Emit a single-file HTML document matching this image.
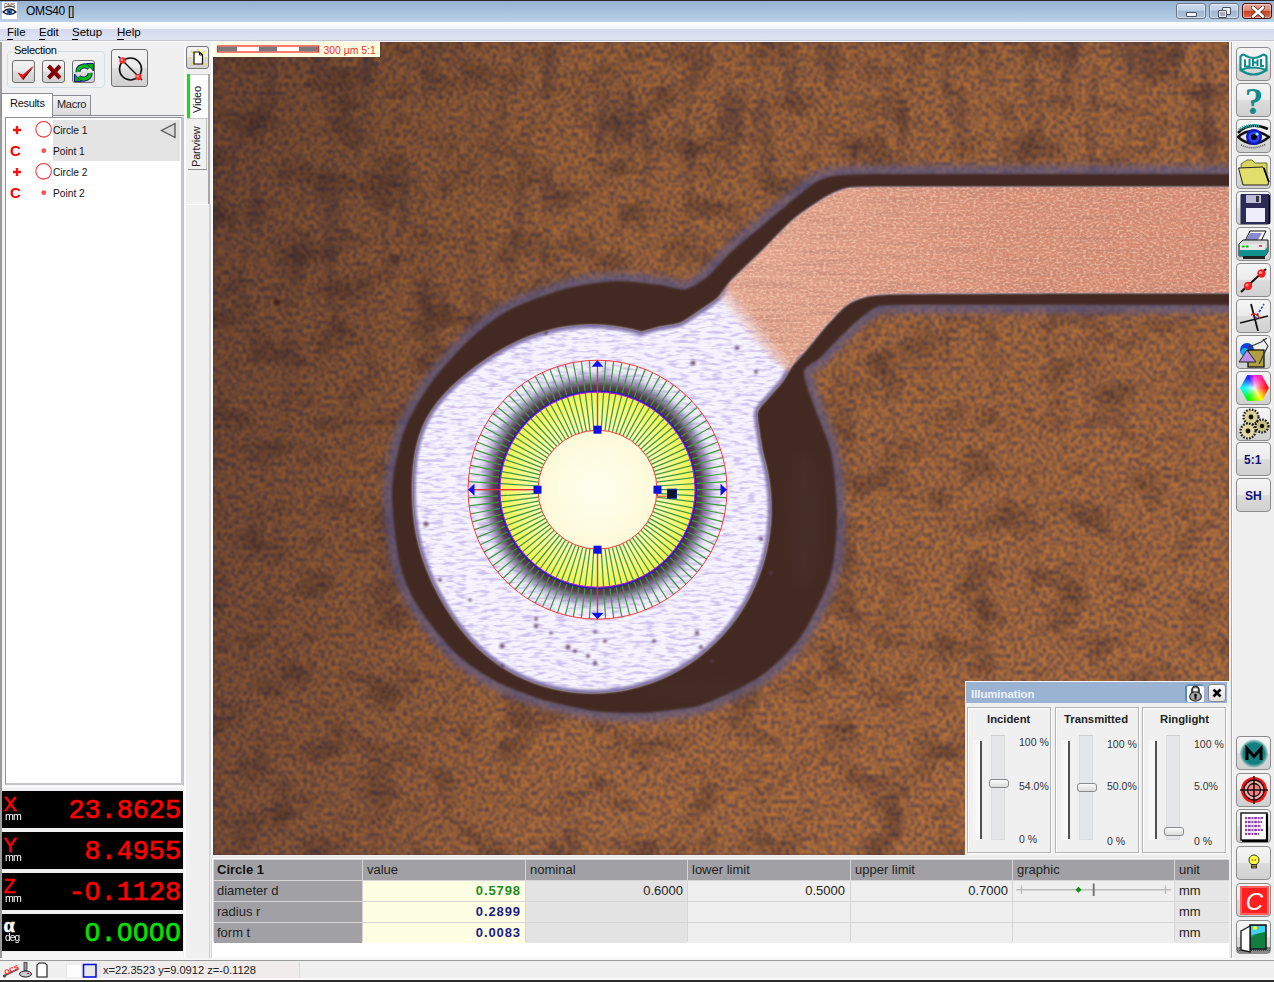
<!DOCTYPE html>
<html><head><meta charset="utf-8">
<style>
*{margin:0;padding:0;box-sizing:border-box}
html,body{width:1274px;height:982px;overflow:hidden;background:#f0f0f0;font-family:"Liberation Sans",sans-serif;font-size:11px;color:#000;position:relative}
.a{position:absolute}
.t{position:absolute;white-space:nowrap;line-height:1}
svg{display:block}
#title{left:0;top:0;width:1274px;height:22px;background:linear-gradient(#97b2d2,#bad1e9);border-top:1px solid #2a2a2a}
#menu{left:0;top:22px;width:1274px;height:19px;background:linear-gradient(#fff 0,#eff2fa 7px,#d4daee 7px,#dfe4f4 18px);border-bottom:1px solid #c2c4d0}
.wbtn{position:absolute;top:2px;width:30px;height:16px;border:1px solid #6a7789;border-radius:3px;background:linear-gradient(#cddcee 0,#bcd0e6 45%,#9db6d3 52%,#afc5de 100%);box-shadow:inset 0 0 0 1px rgba(255,255,255,.45)}
.btn{position:absolute;border:1px solid #707070;border-radius:3px;background:linear-gradient(#f3f3f3 0,#ebebeb 48%,#dddddd 52%,#d0d0d0 100%)}
.tb{position:absolute;left:1236px;width:35px;height:34px;border:1px solid #8c8c8c;border-radius:4px;background:linear-gradient(#f5f5f5 0,#ececec 48%,#dcdcdc 52%,#d0d0d0 100%)}
.tb svg{position:absolute;left:0;top:0}
.dro{position:absolute;left:2px;width:181px;height:37px;background:#000}
.dro .l{position:absolute;left:1.5px;top:3px;font-size:20px;color:#ff0000;line-height:1;-webkit-text-stroke:0.5px currentColor}
.dro .u{position:absolute;left:2.5px;top:20px;font-size:11.5px;color:#fff;line-height:1;letter-spacing:-0.9px;transform:scaleX(0.92);transform-origin:0 0}
.dro .v{position:absolute;right:2px;top:6.5px;font-family:"Liberation Mono",monospace;font-size:26.8px;color:#ff0000;line-height:1;-webkit-text-stroke:0.7px currentColor}
.z{position:relative}.z::after{content:"";position:absolute;left:5.5px;top:9px;width:5px;height:7px;background:#000}
.tr{position:absolute;left:53px;font-size:10.2px;color:#111;line-height:1}
.cell{position:absolute;height:20px;font-size:13px;line-height:20px;color:#222;white-space:nowrap;overflow:hidden}
.hd{background:#a1a1a5}
.nb{font-weight:bold;text-align:right;padding-right:4px;letter-spacing:0.9px}
.pct{position:absolute;font-size:11px;color:#333;line-height:1;white-space:nowrap}
</style></head><body>

<!-- title bar -->
<div id="title" class="a">
  <svg class="a" style="left:1px;top:1px" width="17" height="18" viewBox="0 0 17 18">
    <rect x="1" y="0" width="15" height="17" fill="#fff"/>
    <text x="8.5" y="5" font-size="5" text-anchor="middle" fill="#333" font-family="Liberation Sans">OMS</text>
    <path d="M2,10 Q8.5,4 15,10 Q8.5,15 2,10Z" fill="#fff" stroke="#111" stroke-width="1.2"/>
    <circle cx="8.5" cy="10" r="2.8" fill="#2060c0"/><circle cx="8.5" cy="10" r="1.1" fill="#0a2050"/>
    <path d="M3,6 Q8.5,2.5 14,6" stroke="#222" stroke-width="0.8" fill="none"/>
  </svg>
  <div class="t" style="left:26px;top:4px;font-size:12px;letter-spacing:-0.35px;color:#000">OMS40 []</div>
  <div class="wbtn" style="left:1176px"><div class="a" style="left:9px;top:8px;width:11px;height:5px;background:#f4f4f4;border:1px solid #4a5060;border-radius:1px"></div></div>
  <div class="wbtn" style="left:1209px">
    <div class="a" style="left:12px;top:3px;width:9px;height:8px;background:#eee;border:1px solid #4a5060;border-radius:1px"></div>
    <div class="a" style="left:8px;top:6px;width:9px;height:8px;background:#eee;border:1px solid #4a5060;border-radius:1px"></div>
    <div class="a" style="left:10px;top:8px;width:5px;height:4px;background:#aab;"></div>
  </div>
  <div class="wbtn" style="left:1242px;border-color:#4a1010;background:linear-gradient(#eaa594 0,#df8b78 45%,#c4411f 52%,#d8704f 100%)">
    <svg class="a" style="left:8px;top:2px" width="14" height="12" viewBox="0 0 14 12"><path d="M2,1.5 L12,10.5 M12,1.5 L2,10.5" stroke="#4a3030" stroke-width="4.2" stroke-linecap="round"/><path d="M2,1.5 L12,10.5 M12,1.5 L2,10.5" stroke="#fff" stroke-width="2.6" stroke-linecap="round"/></svg>
  </div>
</div>
<!-- menu -->
<div id="menu" class="a">
  <div class="t" style="left:7px;top:5px;font-size:11.5px;color:#000">File</div>
  <div class="a" style="left:7px;top:17px;width:6px;height:1px;background:#000"></div>
  <div class="t" style="left:39px;top:5px;font-size:11.5px;color:#000">Edit</div>
  <div class="a" style="left:39px;top:17px;width:6px;height:1px;background:#000"></div>
  <div class="t" style="left:72px;top:5px;font-size:11.5px;color:#000">Setup</div>
  <div class="a" style="left:72px;top:17px;width:6px;height:1px;background:#000"></div>
  <div class="t" style="left:117px;top:5px;font-size:11.5px;color:#000">Help</div>
  <div class="a" style="left:117px;top:17px;width:7px;height:1px;background:#000"></div>
</div>
<div class="a" style="left:0;top:41px;width:1274px;height:1px;background:#fafafa"></div>

<!-- left panel -->
<div class="a" style="left:0;top:42px;width:2px;height:916px;background:#9a9a9a"></div>
<div class="a" style="left:7px;top:51px;width:98px;height:37px;border:1px solid #d3dfe6;border-radius:4px"></div>
<div class="t" style="left:13px;top:45px;padding:0 1px;background:#f0f0f0;letter-spacing:-0.3px">Selection</div>
<div class="btn" style="left:12px;top:60px;width:23px;height:23px">
  <svg class="a" style="left:0px;top:0px" width="22" height="22" viewBox="0 0 22 22"><path d="M4.5,11.5 L9.5,18.5 L20.5,4.5 L9.8,13.8 Z" fill="#000" transform="translate(0.8,0.6)"/><path d="M4.5,11.5 L9.5,18.5 L20.5,4.5 L9.8,13.8 Z" fill="#ff0000"/></svg>
</div>
<div class="btn" style="left:42px;top:60px;width:23px;height:23px">
  <svg class="a" style="left:0px;top:0px" width="22" height="22" viewBox="0 0 22 22"><path d="M5.5,5 L17,17 M17,5 L5.5,17" stroke="#7a0000" stroke-width="4"/><path d="M6,5 L17,16" stroke="#a00000" stroke-width="1.2"/></svg>
</div>
<div class="btn" style="left:72px;top:60px;width:23px;height:23px">
  <svg class="a" style="left:0px;top:0px" width="22" height="22" viewBox="0 0 22 22">
    <path d="M5,11 A6.5,5.5 0 0 1 16.5,7" stroke="#1a1a8a" stroke-width="5" fill="none"/>
    <path d="M5,11 A6.5,5.5 0 0 1 16.5,7" stroke="#00c000" stroke-width="3.2" fill="none"/>
    <path d="M13.5,2.5 L20.5,2.5 L20.5,10 Z" fill="#00b000" stroke="#1a1a8a" stroke-width="1"/>
    <path d="M17,12 A6.5,5.5 0 0 1 5.5,16" stroke="#1a1a8a" stroke-width="5" fill="none"/>
    <path d="M17,12 A6.5,5.5 0 0 1 5.5,16" stroke="#00c000" stroke-width="3.2" fill="none"/>
    <path d="M8.5,20.5 L1.5,20.5 L1.5,13 Z" fill="#00b000" stroke="#1a1a8a" stroke-width="1"/>
  </svg>
</div>
<div class="btn" style="left:111px;top:49px;width:37px;height:38px">
  <svg class="a" style="left:2px;top:2px" width="33" height="33" viewBox="0 0 33 33">
    <circle cx="16.5" cy="17" r="11" fill="none" stroke="#111" stroke-width="1.6"/>
    <path d="M4.5,4.5 L28,28" stroke="#111" stroke-width="1.5"/>
    <circle cx="8.5" cy="8.5" r="3.2" fill="#f03030"/><circle cx="7.8" cy="7.8" r="1.2" fill="#ffa0a0"/>
    <circle cx="24.5" cy="25" r="3.2" fill="#f03030"/><circle cx="23.8" cy="24.3" r="1.2" fill="#ffa0a0"/>
  </svg>
</div>

<!-- tabs -->
<div class="a" style="left:52px;top:95px;width:39px;height:21px;background:linear-gradient(#f2f2f2,#dadada);border:1px solid #8a8c94;border-bottom:none"></div>
<div class="t" style="left:57px;top:99px;font-size:11px;letter-spacing:-0.3px;color:#222">Macro</div>
<!-- tree outer -->
<div class="a" style="left:2px;top:115px;width:182px;height:673px;background:#f4f4f4;border-top:1px solid #8a8c94"></div>
<div class="a" style="left:1px;top:93px;width:52px;height:24px;background:#fff;border:1px solid #8a8c94;border-bottom:none"></div>
<div class="t" style="left:10px;top:98px;font-size:11px;letter-spacing:-0.3px;color:#111">Results</div>
<div class="a" style="left:4px;top:117px;width:180px;height:670px;border:1px solid #c2c4ca;border-top-color:#fafafa;border-left-color:#fafafa"></div>
<div class="a" style="left:5px;top:117px;width:178px;height:668px;background:#fff;border:1px solid #8f9096;border-right:2px solid #c4c6cc;border-bottom:2px solid #c4c6cc"></div>
<div class="a" style="left:53px;top:120px;width:127px;height:41px;background:#e4e4e4"></div>
<svg class="a" style="left:8px;top:119px" width="175" height="86" viewBox="8 119 175 86">
  <path d="M13,130 L21,130 M17,126 L17,134" stroke="#ff1010" stroke-width="2.4"/>
  <path d="M13,172 L21,172 M17,168 L17,176" stroke="#ff1010" stroke-width="2.4"/>
  <text x="10" y="156" font-family="Liberation Sans" font-weight="bold" font-size="15" fill="#ff0000">C</text>
  <text x="10" y="198" font-family="Liberation Sans" font-weight="bold" font-size="15" fill="#ff0000">C</text>
  <circle cx="43.6" cy="129.3" r="7.8" fill="none" stroke="#ff3030" stroke-width="1.1"/>
  <circle cx="43.6" cy="171.3" r="7.8" fill="none" stroke="#ff3030" stroke-width="1.1"/>
  <circle cx="43.8" cy="150.7" r="2.4" fill="#ff5050"/>
  <circle cx="43.8" cy="192.7" r="2.4" fill="#ff5050"/>
  <path d="M175,123.5 L175,137.5 L161.5,130.5 Z" fill="#d8d8d8" stroke="#555" stroke-width="1.3"/>
</svg>
<div class="tr" style="top:126px">Circle 1</div>
<div class="tr" style="top:147px">Point 1</div>
<div class="tr" style="top:168px">Circle 2</div>
<div class="tr" style="top:189px">Point 2</div>
<div class="a" style="left:2px;top:786px;width:182px;height:1px;background:#fcfcfc"></div>

<!-- DRO -->
<div class="dro" style="top:791px"><div class="l">X</div><div class="u">mm</div><div class="v">23.8625</div></div>
<div class="dro" style="top:832px"><div class="l">Y</div><div class="u">mm</div><div class="v">8.4955</div></div>
<div class="dro" style="top:873px"><div class="l">Z</div><div class="u">mm</div><div class="v">-<span class="z">0</span>.1128</div></div>
<div class="dro" style="top:914px"><div class="l" style="color:#fff;font-family:'Liberation Serif',serif;font-weight:bold;top:1px;font-size:20px">&#945;</div><div class="u" style="top:18px;font-size:11px">deg</div><div class="v" style="color:#00e400"><span class="z">0</span>.<span class="z">0</span><span class="z">0</span><span class="z">0</span><span class="z">0</span></div></div>
<div class="a" style="left:2px;top:952px;width:181px;height:6px;background:#f6f6f6"></div>

<!-- vertical tab strip -->
<div class="a" style="left:184px;top:42px;width:2px;height:916px;background:#fcfcfc"></div>
<div class="btn" style="left:186px;top:46px;width:23px;height:23px;border-color:#777">
  <svg class="a" style="left:1px;top:1px" width="20" height="20" viewBox="0 0 20 20">
    <path d="M3,3 L6,6 M17,3 L14,6 M3,17 L6,14 M17,17 L14,14 M10,1 L10,3 M1,10 L3,10 M19,10 L17,10" stroke="#f0e020" stroke-width="1.6"/>
    <path d="M6,4 L11.5,4 L14.5,7 L14.5,16 L6,16 Z" fill="#fff" stroke="#111" stroke-width="1.2"/>
    <path d="M11.5,4 L11.5,7 L14.5,7" fill="none" stroke="#111" stroke-width="1"/>
  </svg>
</div>
<div class="a" style="left:187px;top:74px;width:22px;height:45px;background:#fff;border:1px solid #c8c8c8;border-left:none"></div>
<div class="a" style="left:187px;top:74px;width:3px;height:44px;background:#10e010"></div>
<div class="t" style="left:192px;top:113px;font-size:11px;transform:rotate(-90deg);transform-origin:0 0;color:#111;letter-spacing:-0.2px">Video</div>
<div class="a" style="left:188px;top:119px;width:19px;height:51px;background:#f0f0f0;border-right:1px solid #c0c0c0;border-bottom:1px solid #909090"></div>
<div class="t" style="left:191px;top:167px;font-size:11px;transform:rotate(-90deg);transform-origin:0 0;color:#222;letter-spacing:-0.2px">Partview</div>
<div class="a" style="left:208px;top:74px;width:2px;height:130px;background:#a8a8a8"></div>
<div class="a" style="left:186px;top:204px;width:24px;height:1px;background:#fcfcfc"></div>
<div class="a" style="left:209px;top:204px;width:2px;height:754px;background:#cfcfcf"></div>
<div class="a" style="left:211px;top:42px;width:2px;height:916px;background:#fbfbfb"></div>


<!-- video -->
<div class="a" id="video" style="left:213px;top:42px;width:1016px;height:813px;background:#7a5a3a;overflow:hidden">
<svg width="1016" height="813" viewBox="213 42 1016 813" style="position:absolute;left:0;top:0;display:block">
<defs>
<filter id="ftex" color-interpolation-filters="sRGB" x="0" y="0" width="1" height="1" filterUnits="objectBoundingBox"><feTurbulence type="fractalNoise" baseFrequency="0.28 0.24" numOctaves="2" seed="7"/><feColorMatrix type="matrix" values="0 0 0 0 0.75  0 0 0 0 0.46  0 0 0 0 0.21  3.0 0 0 0 -0.9"/><feGaussianBlur stdDeviation="0.8"/><feComposite in2="SourceGraphic" operator="in"/></filter>
<filter id="ftexP" color-interpolation-filters="sRGB" x="0" y="0" width="1" height="1" filterUnits="objectBoundingBox"><feTurbulence type="fractalNoise" baseFrequency="0.09 0.32" numOctaves="2" seed="11"/><feColorMatrix type="matrix" values="0 0 0 0 0.66  0 0 0 0 0.56  0 0 0 0 0.88  3.2 0 0 0 -1.45"/><feGaussianBlur stdDeviation="0.6"/><feComposite in2="SourceGraphic" operator="in"/></filter>
<filter id="ftexT" color-interpolation-filters="sRGB" x="0" y="0" width="1" height="1" filterUnits="objectBoundingBox"><feTurbulence type="fractalNoise" baseFrequency="0.3 0.5" numOctaves="2" seed="5"/><feColorMatrix type="matrix" values="0 0 0 0 1  0 0 0 0 0.88  0 0 0 0 0.8  3.0 0 0 0 -1.25"/><feGaussianBlur stdDeviation="0.6"/><feComposite in2="SourceGraphic" operator="in"/></filter>
<filter id="ftexS" color-interpolation-filters="sRGB" x="0" y="0" width="1" height="1" filterUnits="objectBoundingBox"><feTurbulence type="fractalNoise" baseFrequency="0.015 0.3" numOctaves="2" seed="9"/><feColorMatrix type="matrix" values="0 0 0 0 0.72  0 0 0 0 0.5  0 0 0 0 0.45  3.0 0 0 0 -1.3"/></filter>
<filter id="b1" x="-10%" y="-10%" width="120%" height="120%"><feGaussianBlur stdDeviation="1.2"/></filter>
<filter id="b3" x="-10%" y="-10%" width="120%" height="120%"><feGaussianBlur stdDeviation="3"/></filter>
<filter id="b6" x="-20%" y="-20%" width="140%" height="140%"><feGaussianBlur stdDeviation="6"/></filter>
<filter id="fstreak" color-interpolation-filters="sRGB" x="0" y="0" width="1" height="1" filterUnits="objectBoundingBox"><feTurbulence type="fractalNoise" baseFrequency="0.05 0.012" numOctaves="2" seed="21"/><feColorMatrix type="matrix" values="0 0 0 0 0.2  0 0 0 0 0.15  0 0 0 0 0.2  -3.2 0 0 0 1.55"/><feComposite in2="SourceGraphic" operator="in"/></filter>
<filter id="fpatch" color-interpolation-filters="sRGB" x="0" y="0" width="1" height="1" filterUnits="objectBoundingBox"><feTurbulence type="fractalNoise" baseFrequency="0.022 0.03" numOctaves="3" seed="33"/><feColorMatrix type="matrix" values="0 0 0 0 0.12  0 0 0 0 0.08  0 0 0 0 0.12  -2.6 0 0 0 1.32"/><feComposite in2="SourceGraphic" operator="in"/></filter>
<linearGradient id="streakfade" x1="0" y1="0" x2="0" y2="1"><stop offset="0" stop-color="#fff" stop-opacity=".8"/><stop offset="0.2" stop-color="#fff" stop-opacity=".6"/><stop offset="0.45" stop-color="#fff" stop-opacity=".15"/><stop offset="1" stop-color="#fff" stop-opacity="0"/></linearGradient>
<mask id="smask" maskUnits="userSpaceOnUse" x="213" y="42" width="1016" height="813"><rect x="213" y="42" width="1016" height="813" fill="url(#streakfade)"/></mask>
<linearGradient id="leftdark" gradientUnits="userSpaceOnUse" x1="213" y1="0" x2="560" y2="0"><stop offset="0" stop-color="#1a1020" stop-opacity=".28"/><stop offset="1" stop-color="#1a0c10" stop-opacity="0"/></linearGradient><linearGradient id="light" x1="0" y1="0" x2="1" y2="1"><stop offset="0" stop-color="#000" stop-opacity=".18"/><stop offset=".45" stop-color="#000" stop-opacity=".06"/><stop offset="1" stop-color="#000" stop-opacity="0"/></linearGradient>
<radialGradient id="hole" cx="597.5" cy="489.7" r="130" gradientUnits="userSpaceOnUse"><stop offset="0.74" stop-color="#42283a" stop-opacity="1"/><stop offset="0.80" stop-color="#4c3448" stop-opacity="0.92"/><stop offset="0.86" stop-color="#65528a" stop-opacity="0.55"/><stop offset="0.91" stop-color="#9080c0" stop-opacity="0.15"/><stop offset="0.96" stop-color="#c0b0e0" stop-opacity="0"/></radialGradient>
<radialGradient id="yel" cx="597.5" cy="489.7" r="98" gradientUnits="userSpaceOnUse"><stop offset="0.6" stop-color="#fcfcc0"/><stop offset="0.8" stop-color="#f8f888"/><stop offset="1" stop-color="#f2f250"/></radialGradient>
<radialGradient id="inn" cx="597.5" cy="489.7" r="60" gradientUnits="userSpaceOnUse"><stop offset="0" stop-color="#fffff0"/><stop offset="1" stop-color="#fdfad8"/></radialGradient>
<linearGradient id="trg" x1="0" y1="0" x2="1" y2="0"><stop offset="0" stop-color="#e4a890"/><stop offset="0.5" stop-color="#d68c72"/><stop offset="1" stop-color="#d2886e"/></linearGradient>
</defs>
<rect x="213" y="42" width="1016" height="813" fill="#644a4e"/>
<rect x="213" y="42" width="1016" height="813" fill="#a06a34" filter="url(#ftex)"/>
<rect x="213" y="42" width="1016" height="813" fill="url(#light)"/>
<rect x="213" y="42" width="1016" height="813" fill="url(#leftdark)"/>
<rect x="213" y="42" width="1016" height="813" fill="#000" filter="url(#fpatch)" opacity=".4"/>
<g filter="url(#b1)"><ellipse cx="277" cy="302.5" rx="3.5" ry="3" fill="#3a1a14" opacity=".85"/><ellipse cx="395" cy="259" rx="6" ry="4" fill="#2a2028" opacity=".5"/></g>
<rect x="213" y="42" width="1016" height="813" fill="#000" filter="url(#fstreak)" mask="url(#smask)" opacity=".55"/>
<path d="M1300.0,174.0 C1292.0,156.5 1266.7,174.0 1240.0,174.0 C1213.3,174.0 1145.3,174.0 1100.0,174.0 C1054.7,174.0 934.5,173.9 900.0,174.0 C865.5,174.1 851.9,174.1 841.0,175.0 C830.1,175.9 824.3,177.8 818.0,181.0 C811.7,184.2 801.3,193.1 794.0,199.0 C786.7,204.9 771.4,217.9 763.0,225.0 C754.6,232.1 738.3,245.2 731.0,252.0 C723.7,258.8 714.0,271.1 708.0,276.0 C702.0,280.9 692.4,287.8 686.0,289.0 C679.6,290.2 669.2,286.1 660.0,285.0 C650.8,283.9 629.3,280.6 617.0,281.0 C604.7,281.4 582.1,284.3 568.0,288.0 C553.9,291.7 523.9,302.3 511.0,309.0 C498.1,315.7 481.7,328.1 471.0,338.0 C460.3,347.9 439.9,370.6 431.0,383.0 C422.1,395.4 409.2,416.7 404.0,431.0 C398.8,445.3 392.7,472.8 392.0,490.0 C391.3,507.2 396.1,545.3 399.0,560.0 C401.9,574.7 408.5,589.9 414.0,600.0 C419.5,610.1 433.1,627.7 440.0,636.0 C446.9,644.3 458.1,655.7 466.0,662.0 C473.9,668.3 489.1,678.1 499.0,683.0 C508.9,687.9 530.1,695.8 540.0,699.0 C549.9,702.2 564.9,705.3 573.0,707.0 C581.1,708.7 591.5,711.2 601.0,712.0 C610.5,712.8 634.5,713.3 644.0,713.0 C653.5,712.7 664.0,711.2 672.0,710.0 C680.0,708.8 692.1,708.5 704.0,704.0 C715.9,699.5 747.9,685.2 761.0,676.0 C774.1,666.8 792.7,648.6 802.0,635.0 C811.3,621.4 826.3,590.3 831.0,574.0 C835.7,557.7 837.0,529.3 837.0,513.0 C837.0,496.7 834.1,466.3 831.0,452.0 C827.9,437.7 817.6,416.7 814.0,406.0 C810.4,395.3 803.2,378.4 804.0,372.0 C804.8,365.6 815.2,362.7 820.0,358.0 C824.8,353.3 835.2,341.8 840.0,337.0 C844.8,332.2 851.3,325.9 856.0,322.0 C860.7,318.1 869.1,310.3 875.0,308.0 C880.9,305.7 870.0,305.4 900.0,305.0 C930.0,304.6 1054.7,305.0 1100.0,305.0 C1145.3,305.0 1213.3,305.0 1240.0,305.0 C1266.7,305.0 1292.0,322.5 1300.0,305.0 C1308.0,287.5 1308.0,191.5 1300.0,174.0Z" fill="none" stroke="#5a5a8c" stroke-width="17" filter="url(#b3)" opacity=".65"/>
<path d="M1300.0,174.0 C1292.0,156.5 1266.7,174.0 1240.0,174.0 C1213.3,174.0 1145.3,174.0 1100.0,174.0 C1054.7,174.0 934.5,173.9 900.0,174.0 C865.5,174.1 851.9,174.1 841.0,175.0 C830.1,175.9 824.3,177.8 818.0,181.0 C811.7,184.2 801.3,193.1 794.0,199.0 C786.7,204.9 771.4,217.9 763.0,225.0 C754.6,232.1 738.3,245.2 731.0,252.0 C723.7,258.8 714.0,271.1 708.0,276.0 C702.0,280.9 692.4,287.8 686.0,289.0 C679.6,290.2 669.2,286.1 660.0,285.0 C650.8,283.9 629.3,280.6 617.0,281.0 C604.7,281.4 582.1,284.3 568.0,288.0 C553.9,291.7 523.9,302.3 511.0,309.0 C498.1,315.7 481.7,328.1 471.0,338.0 C460.3,347.9 439.9,370.6 431.0,383.0 C422.1,395.4 409.2,416.7 404.0,431.0 C398.8,445.3 392.7,472.8 392.0,490.0 C391.3,507.2 396.1,545.3 399.0,560.0 C401.9,574.7 408.5,589.9 414.0,600.0 C419.5,610.1 433.1,627.7 440.0,636.0 C446.9,644.3 458.1,655.7 466.0,662.0 C473.9,668.3 489.1,678.1 499.0,683.0 C508.9,687.9 530.1,695.8 540.0,699.0 C549.9,702.2 564.9,705.3 573.0,707.0 C581.1,708.7 591.5,711.2 601.0,712.0 C610.5,712.8 634.5,713.3 644.0,713.0 C653.5,712.7 664.0,711.2 672.0,710.0 C680.0,708.8 692.1,708.5 704.0,704.0 C715.9,699.5 747.9,685.2 761.0,676.0 C774.1,666.8 792.7,648.6 802.0,635.0 C811.3,621.4 826.3,590.3 831.0,574.0 C835.7,557.7 837.0,529.3 837.0,513.0 C837.0,496.7 834.1,466.3 831.0,452.0 C827.9,437.7 817.6,416.7 814.0,406.0 C810.4,395.3 803.2,378.4 804.0,372.0 C804.8,365.6 815.2,362.7 820.0,358.0 C824.8,353.3 835.2,341.8 840.0,337.0 C844.8,332.2 851.3,325.9 856.0,322.0 C860.7,318.1 869.1,310.3 875.0,308.0 C880.9,305.7 870.0,305.4 900.0,305.0 C930.0,304.6 1054.7,305.0 1100.0,305.0 C1145.3,305.0 1213.3,305.0 1240.0,305.0 C1266.7,305.0 1292.0,322.5 1300.0,305.0 C1308.0,287.5 1308.0,191.5 1300.0,174.0Z" fill="#432b22" filter="url(#b1)"/>
<g filter="url(#b6)" opacity=".18"><ellipse cx="805" cy="520" rx="16" ry="70" fill="#5a4048"/><ellipse cx="700" cy="690" rx="60" ry="10" fill="#503a3a"/></g>
<clipPath id="padclip"><path d="M641.6,332.2 L632.6,329.8 L623.4,327.9 L614.1,326.4 L604.8,325.5 L595.4,325.0 L586.1,325.1 L576.7,325.7 L567.4,326.7 L558.2,328.3 L549.0,330.4 L540.0,332.9 L531.1,336.0 L522.3,339.4 L513.8,343.4 L505.4,347.7 L497.2,352.4 L489.2,357.5 L481.3,362.9 L473.6,368.5 L466.1,374.5 L458.7,380.7 L451.5,387.3 L444.5,394.4 L438.1,401.9 L432.2,409.9 L427.0,418.5 L422.7,427.5 L419.3,436.9 L416.7,446.6 L414.8,456.4 L413.6,466.3 L412.8,476.2 L412.5,486.0 L412.6,495.8 L413.0,505.5 L413.8,515.1 L414.9,524.6 L416.5,534.0 L418.6,543.3 L421.1,552.5 L424.0,561.5 L427.3,570.3 L430.9,578.9 L434.9,587.4 L439.2,595.7 L443.8,603.8 L448.7,611.7 L453.9,619.5 L459.5,627.0 L465.4,634.2 L471.6,641.2 L478.2,647.9 L485.2,654.2 L492.5,660.1 L500.1,665.5 L508.1,670.5 L516.3,675.0 L524.8,679.1 L533.5,682.6 L542.4,685.6 L551.5,688.1 L560.6,690.1 L569.9,691.5 L579.2,692.5 L588.6,692.9 L597.9,692.9 L607.3,692.3 L616.6,691.3 L625.8,689.7 L635.0,687.6 L644.0,685.1 L652.9,682.0 L661.7,678.5 L670.2,674.5 L678.5,670.1 L686.6,665.2 L694.4,659.9 L702.0,654.2 L709.2,648.1 L716.1,641.6 L722.7,634.7 L728.9,627.5 L734.8,620.0 L740.2,612.2 L745.3,604.0 L749.9,595.7 L754.1,587.1 L757.8,578.2 L761.1,569.2 L764.0,560.0 L766.3,550.7 L768.2,541.3 L769.6,531.7 L770.5,522.2 L771.0,512.5 L770.9,502.9 L770.3,493.3 L769.3,483.7 L767.8,474.2 L765.8,464.8 L763.3,455.5 L762.0,450.0 C761.5,446.3 756.4,418.2 757.0,413.0 C757.6,407.8 765.5,401.1 768.0,398.0 C770.5,394.9 779.6,385.2 782.0,382.0 C784.4,378.8 789.5,369.3 792.0,366.0 C794.5,362.7 803.7,352.9 807.0,349.0 C810.3,345.1 821.4,331.1 825.0,327.0 C828.6,322.9 839.9,310.7 843.0,308.0 C846.1,305.3 851.3,301.4 856.0,300.0 C860.7,298.6 865.6,294.7 890.0,294.0 C914.4,293.3 1065.0,293.1 1100.0,293.0 C1135.0,292.9 1220.0,293.0 1240.0,293.0 C1260.0,293.0 1294.0,303.6 1300.0,293.0 C1306.0,282.4 1306.0,197.6 1300.0,187.0 C1294.0,176.4 1260.0,187.0 1240.0,187.0 C1220.0,187.0 1134.0,187.0 1100.0,187.0 C1066.0,187.0 925.1,186.9 900.0,187.0 C874.9,187.1 856.4,187.0 849.0,188.0 C841.6,189.0 831.5,193.9 826.0,197.0 C820.5,200.1 800.3,213.7 794.0,219.0 C787.7,224.3 769.3,243.8 763.0,250.0 C756.7,256.2 735.5,276.2 731.0,281.0 C726.5,285.8 721.0,295.1 718.0,298.0 C715.0,300.9 704.7,307.5 701.0,310.0 C697.3,312.5 685.1,321.3 681.0,323.0 C676.9,324.7 662.1,326.6 660.0,327.0Z"/></clipPath>
<path d="M641.6,332.2 L632.6,329.8 L623.4,327.9 L614.1,326.4 L604.8,325.5 L595.4,325.0 L586.1,325.1 L576.7,325.7 L567.4,326.7 L558.2,328.3 L549.0,330.4 L540.0,332.9 L531.1,336.0 L522.3,339.4 L513.8,343.4 L505.4,347.7 L497.2,352.4 L489.2,357.5 L481.3,362.9 L473.6,368.5 L466.1,374.5 L458.7,380.7 L451.5,387.3 L444.5,394.4 L438.1,401.9 L432.2,409.9 L427.0,418.5 L422.7,427.5 L419.3,436.9 L416.7,446.6 L414.8,456.4 L413.6,466.3 L412.8,476.2 L412.5,486.0 L412.6,495.8 L413.0,505.5 L413.8,515.1 L414.9,524.6 L416.5,534.0 L418.6,543.3 L421.1,552.5 L424.0,561.5 L427.3,570.3 L430.9,578.9 L434.9,587.4 L439.2,595.7 L443.8,603.8 L448.7,611.7 L453.9,619.5 L459.5,627.0 L465.4,634.2 L471.6,641.2 L478.2,647.9 L485.2,654.2 L492.5,660.1 L500.1,665.5 L508.1,670.5 L516.3,675.0 L524.8,679.1 L533.5,682.6 L542.4,685.6 L551.5,688.1 L560.6,690.1 L569.9,691.5 L579.2,692.5 L588.6,692.9 L597.9,692.9 L607.3,692.3 L616.6,691.3 L625.8,689.7 L635.0,687.6 L644.0,685.1 L652.9,682.0 L661.7,678.5 L670.2,674.5 L678.5,670.1 L686.6,665.2 L694.4,659.9 L702.0,654.2 L709.2,648.1 L716.1,641.6 L722.7,634.7 L728.9,627.5 L734.8,620.0 L740.2,612.2 L745.3,604.0 L749.9,595.7 L754.1,587.1 L757.8,578.2 L761.1,569.2 L764.0,560.0 L766.3,550.7 L768.2,541.3 L769.6,531.7 L770.5,522.2 L771.0,512.5 L770.9,502.9 L770.3,493.3 L769.3,483.7 L767.8,474.2 L765.8,464.8 L763.3,455.5 L762.0,450.0 C761.5,446.3 756.4,418.2 757.0,413.0 C757.6,407.8 765.5,401.1 768.0,398.0 C770.5,394.9 779.6,385.2 782.0,382.0 C784.4,378.8 789.5,369.3 792.0,366.0 C794.5,362.7 803.7,352.9 807.0,349.0 C810.3,345.1 821.4,331.1 825.0,327.0 C828.6,322.9 839.9,310.7 843.0,308.0 C846.1,305.3 851.3,301.4 856.0,300.0 C860.7,298.6 865.6,294.7 890.0,294.0 C914.4,293.3 1065.0,293.1 1100.0,293.0 C1135.0,292.9 1220.0,293.0 1240.0,293.0 C1260.0,293.0 1294.0,303.6 1300.0,293.0 C1306.0,282.4 1306.0,197.6 1300.0,187.0 C1294.0,176.4 1260.0,187.0 1240.0,187.0 C1220.0,187.0 1134.0,187.0 1100.0,187.0 C1066.0,187.0 925.1,186.9 900.0,187.0 C874.9,187.1 856.4,187.0 849.0,188.0 C841.6,189.0 831.5,193.9 826.0,197.0 C820.5,200.1 800.3,213.7 794.0,219.0 C787.7,224.3 769.3,243.8 763.0,250.0 C756.7,256.2 735.5,276.2 731.0,281.0 C726.5,285.8 721.0,295.1 718.0,298.0 C715.0,300.9 704.7,307.5 701.0,310.0 C697.3,312.5 685.1,321.3 681.0,323.0 C676.9,324.7 662.1,326.6 660.0,327.0Z" fill="#f6f3fe" filter="url(#b1)"/>
<g clip-path="url(#padclip)"><rect x="380" y="170" width="860" height="540" fill="#a890e0" filter="url(#ftexP)" opacity=".5"/><path d="M641.6,332.2 L632.6,329.8 L623.4,327.9 L614.1,326.4 L604.8,325.5 L595.4,325.0 L586.1,325.1 L576.7,325.7 L567.4,326.7 L558.2,328.3 L549.0,330.4 L540.0,332.9 L531.1,336.0 L522.3,339.4 L513.8,343.4 L505.4,347.7 L497.2,352.4 L489.2,357.5 L481.3,362.9 L473.6,368.5 L466.1,374.5 L458.7,380.7 L451.5,387.3 L444.5,394.4 L438.1,401.9 L432.2,409.9 L427.0,418.5 L422.7,427.5 L419.3,436.9 L416.7,446.6 L414.8,456.4 L413.6,466.3 L412.8,476.2 L412.5,486.0 L412.6,495.8 L413.0,505.5 L413.8,515.1 L414.9,524.6 L416.5,534.0 L418.6,543.3 L421.1,552.5 L424.0,561.5 L427.3,570.3 L430.9,578.9 L434.9,587.4 L439.2,595.7 L443.8,603.8 L448.7,611.7 L453.9,619.5 L459.5,627.0 L465.4,634.2 L471.6,641.2 L478.2,647.9 L485.2,654.2 L492.5,660.1 L500.1,665.5 L508.1,670.5 L516.3,675.0 L524.8,679.1 L533.5,682.6 L542.4,685.6 L551.5,688.1 L560.6,690.1 L569.9,691.5 L579.2,692.5 L588.6,692.9 L597.9,692.9 L607.3,692.3 L616.6,691.3 L625.8,689.7 L635.0,687.6 L644.0,685.1 L652.9,682.0 L661.7,678.5 L670.2,674.5 L678.5,670.1 L686.6,665.2 L694.4,659.9 L702.0,654.2 L709.2,648.1 L716.1,641.6 L722.7,634.7 L728.9,627.5 L734.8,620.0 L740.2,612.2 L745.3,604.0 L749.9,595.7 L754.1,587.1 L757.8,578.2 L761.1,569.2 L764.0,560.0 L766.3,550.7 L768.2,541.3 L769.6,531.7 L770.5,522.2 L771.0,512.5 L770.9,502.9 L770.3,493.3 L769.3,483.7 L767.8,474.2 L765.8,464.8 L763.3,455.5 L762.0,450.0 C761.5,446.3 756.4,418.2 757.0,413.0 C757.6,407.8 765.5,401.1 768.0,398.0 C770.5,394.9 779.6,385.2 782.0,382.0 C784.4,378.8 789.5,369.3 792.0,366.0 C794.5,362.7 803.7,352.9 807.0,349.0 C810.3,345.1 821.4,331.1 825.0,327.0 C828.6,322.9 839.9,310.7 843.0,308.0 C846.1,305.3 851.3,301.4 856.0,300.0 C860.7,298.6 865.6,294.7 890.0,294.0 C914.4,293.3 1065.0,293.1 1100.0,293.0 C1135.0,292.9 1220.0,293.0 1240.0,293.0 C1260.0,293.0 1294.0,303.6 1300.0,293.0 C1306.0,282.4 1306.0,197.6 1300.0,187.0 C1294.0,176.4 1260.0,187.0 1240.0,187.0 C1220.0,187.0 1134.0,187.0 1100.0,187.0 C1066.0,187.0 925.1,186.9 900.0,187.0 C874.9,187.1 856.4,187.0 849.0,188.0 C841.6,189.0 831.5,193.9 826.0,197.0 C820.5,200.1 800.3,213.7 794.0,219.0 C787.7,224.3 769.3,243.8 763.0,250.0 C756.7,256.2 735.5,276.2 731.0,281.0 C726.5,285.8 721.0,295.1 718.0,298.0 C715.0,300.9 704.7,307.5 701.0,310.0 C697.3,312.5 685.1,321.3 681.0,323.0 C676.9,324.7 662.1,326.6 660.0,327.0Z" fill="none" stroke="#6a5a98" stroke-width="7" filter="url(#b1)" opacity=".7"/></g>
<g fill="#5a3a58" opacity=".8" filter="url(#b1)"><circle cx="426" cy="524" r="2.5"/><circle cx="502" cy="646" r="2.5"/><circle cx="536" cy="619" r="2"/><circle cx="575" cy="651" r="2"/><circle cx="605" cy="641" r="2"/><circle cx="693" cy="363" r="2.5"/><circle cx="737" cy="348" r="2"/><circle cx="756" cy="372" r="2"/><circle cx="761" cy="539" r="2"/><circle cx="771" cy="573" r="2"/><circle cx="712" cy="661" r="2"/><circle cx="502" cy="666" r="2"/><circle cx="654" cy="641" r="2"/><circle cx="546" cy="333" r="2"/><circle cx="536" cy="626" r="2.2"/><circle cx="568" cy="647" r="2.5"/><circle cx="588" cy="656" r="2"/><circle cx="595" cy="663" r="2.2"/><circle cx="551" cy="633" r="1.8"/><circle cx="697" cy="633" r="2.2"/><circle cx="701" cy="647" r="2"/><circle cx="595" cy="632" r="1.8"/><circle cx="470" cy="600" r="1.8"/><circle cx="440" cy="580" r="2"/></g>
<linearGradient id="trm" gradientUnits="userSpaceOnUse" x1="748" y1="339" x2="764" y2="326"><stop offset="0" stop-color="#000"/><stop offset="1" stop-color="#fff"/></linearGradient>
<mask id="trmask" maskUnits="userSpaceOnUse" x="213" y="42" width="1016" height="813"><rect x="213" y="42" width="1016" height="813" fill="url(#trm)"/></mask>
<g mask="url(#trmask)" clip-path="url(#padclip)">
<path d="M712.0,304.0 C705.8,296.1 722.1,294.3 724.0,292.0 C725.9,289.7 727.1,285.2 731.0,281.0 C734.9,276.8 756.7,256.2 763.0,250.0 C769.3,243.8 787.7,224.3 794.0,219.0 C800.3,213.7 820.5,200.1 826.0,197.0 C831.5,193.9 841.6,189.0 849.0,188.0 C856.4,187.0 874.9,187.1 900.0,187.0 C925.1,186.9 1066.0,187.0 1100.0,187.0 C1134.0,187.0 1220.0,187.0 1240.0,187.0 C1260.0,187.0 1294.0,176.4 1300.0,187.0 C1306.0,197.6 1306.0,282.4 1300.0,293.0 C1294.0,303.6 1260.0,293.0 1240.0,293.0 C1220.0,293.0 1135.0,292.9 1100.0,293.0 C1065.0,293.1 914.4,293.3 890.0,294.0 C865.6,294.7 860.7,298.6 856.0,300.0 C851.3,301.4 846.1,305.3 843.0,308.0 C839.9,310.7 828.6,322.9 825.0,327.0 C821.4,331.1 809.8,345.9 807.0,349.0 C804.2,352.1 799.1,355.8 797.0,358.0 C794.9,360.2 794.5,376.4 786.0,371.0 C777.5,365.6 718.2,311.9 712.0,304.0Z" fill="url(#trg)" filter="url(#b1)"/>
<clipPath id="trclip"><path d="M712.0,304.0 C705.8,296.1 722.1,294.3 724.0,292.0 C725.9,289.7 727.1,285.2 731.0,281.0 C734.9,276.8 756.7,256.2 763.0,250.0 C769.3,243.8 787.7,224.3 794.0,219.0 C800.3,213.7 820.5,200.1 826.0,197.0 C831.5,193.9 841.6,189.0 849.0,188.0 C856.4,187.0 874.9,187.1 900.0,187.0 C925.1,186.9 1066.0,187.0 1100.0,187.0 C1134.0,187.0 1220.0,187.0 1240.0,187.0 C1260.0,187.0 1294.0,176.4 1300.0,187.0 C1306.0,197.6 1306.0,282.4 1300.0,293.0 C1294.0,303.6 1260.0,293.0 1240.0,293.0 C1220.0,293.0 1135.0,292.9 1100.0,293.0 C1065.0,293.1 914.4,293.3 890.0,294.0 C865.6,294.7 860.7,298.6 856.0,300.0 C851.3,301.4 846.1,305.3 843.0,308.0 C839.9,310.7 828.6,322.9 825.0,327.0 C821.4,331.1 809.8,345.9 807.0,349.0 C804.2,352.1 799.1,355.8 797.0,358.0 C794.9,360.2 794.5,376.4 786.0,371.0 C777.5,365.6 718.2,311.9 712.0,304.0Z"/></clipPath>
<g clip-path="url(#trclip)"><rect x="700" y="180" width="540" height="190" fill="#fff" filter="url(#ftexS)" opacity=".5"/><rect x="700" y="180" width="540" height="190" fill="#fff" filter="url(#ftexT)" opacity=".5"/></g>
</g>
<circle cx="597.5" cy="489.7" r="130" fill="url(#hole)"/>
<circle cx="597.5" cy="489.7" r="97.5" fill="url(#yel)"/>
<circle cx="597.5" cy="489.7" r="59.5" fill="url(#inn)"/>
<path d="M657.0,489.7L727.0,489.7M656.9,493.4L726.7,497.8M656.5,497.2L726.0,505.9M655.9,500.8L724.7,514.0M655.1,504.5L722.9,521.9M654.1,508.1L720.7,529.7M652.8,511.6L717.9,537.4M651.3,515.0L714.7,544.8M649.6,518.4L711.0,552.1M647.7,521.6L706.8,559.1M645.6,524.7L702.3,565.8M643.3,527.6L697.3,572.2M640.9,530.4L691.9,578.3M638.2,533.1L686.1,584.1M635.4,535.5L680.0,589.5M632.5,537.8L673.6,594.5M629.4,539.9L666.9,599.0M626.2,541.8L659.9,603.2M622.8,543.5L652.6,606.9M619.4,545.0L645.2,610.1M615.9,546.3L637.5,612.9M612.3,547.3L629.7,615.1M608.6,548.1L621.8,616.9M605.0,548.7L613.7,618.2M601.2,549.1L605.6,618.9M597.5,549.2L597.5,619.2M593.8,549.1L589.4,618.9M590.0,548.7L581.3,618.2M586.4,548.1L573.2,616.9M582.7,547.3L565.3,615.1M579.1,546.3L557.5,612.9M575.6,545.0L549.8,610.1M572.2,543.5L542.4,606.9M568.8,541.8L535.1,603.2M565.6,539.9L528.1,599.0M562.5,537.8L521.4,594.5M559.6,535.5L515.0,589.5M556.8,533.1L508.9,584.1M554.1,530.4L503.1,578.3M551.7,527.6L497.7,572.2M549.4,524.7L492.7,565.8M547.3,521.6L488.2,559.1M545.4,518.4L484.0,552.1M543.7,515.0L480.3,544.8M542.2,511.6L477.1,537.4M540.9,508.1L474.3,529.7M539.9,504.5L472.1,521.9M539.1,500.8L470.3,514.0M538.5,497.2L469.0,505.9M538.1,493.4L468.3,497.8M538.0,489.7L468.0,489.7M538.1,486.0L468.3,481.6M538.5,482.2L469.0,473.5M539.1,478.6L470.3,465.4M539.9,474.9L472.1,457.5M540.9,471.3L474.3,449.7M542.2,467.8L477.1,442.0M543.7,464.4L480.3,434.6M545.4,461.0L484.0,427.3M547.3,457.8L488.2,420.3M549.4,454.7L492.7,413.6M551.7,451.8L497.7,407.2M554.1,449.0L503.1,401.1M556.8,446.3L508.9,395.3M559.6,443.9L515.0,389.9M562.5,441.6L521.4,384.9M565.6,439.5L528.1,380.4M568.8,437.6L535.1,376.2M572.2,435.9L542.4,372.5M575.6,434.4L549.8,369.3M579.1,433.1L557.5,366.5M582.7,432.1L565.3,364.3M586.4,431.3L573.2,362.5M590.0,430.7L581.3,361.2M593.8,430.3L589.4,360.5M597.5,430.2L597.5,360.2M601.2,430.3L605.6,360.5M605.0,430.7L613.7,361.2M608.6,431.3L621.8,362.5M612.3,432.1L629.7,364.3M615.9,433.1L637.5,366.5M619.4,434.4L645.2,369.3M622.8,435.9L652.6,372.5M626.2,437.6L659.9,376.2M629.4,439.5L666.9,380.4M632.5,441.6L673.6,384.9M635.4,443.9L680.0,389.9M638.2,446.3L686.1,395.3M640.9,449.0L691.9,401.1M643.3,451.8L697.3,407.2M645.6,454.7L702.3,413.6M647.7,457.8L706.8,420.3M649.6,461.0L711.0,427.3M651.3,464.4L714.7,434.6M652.8,467.8L717.9,442.0M654.1,471.3L720.7,449.7M655.1,474.9L722.9,457.5M655.9,478.6L724.7,465.4M656.5,482.2L726.0,473.5M656.9,486.0L726.7,481.6" stroke="#3c9a3c" stroke-width="1.25" fill="none"/>
<path d="M696.0,491.9L696.0,487.5M695.7,498.1L695.9,493.7M694.9,504.2L695.5,499.9M693.8,510.3L694.7,506.0M692.4,516.3L693.5,512.1M690.5,522.2L691.9,518.0M688.3,528.0L689.9,523.9M685.7,533.6L687.6,529.6M682.8,539.1L684.9,535.2M679.5,544.3L681.8,540.6M675.9,549.4L678.5,545.8M672.0,554.2L674.8,550.8M667.8,558.7L670.8,555.5M663.3,563.0L666.5,560.0M658.6,567.0L662.0,564.2M653.6,570.7L657.2,568.1M648.4,574.0L652.1,571.7M643.0,577.1L646.9,575.0M637.4,579.8L641.4,577.9M631.7,582.1L635.8,580.5M625.8,584.1L630.0,582.7M619.9,585.7L624.1,584.6M613.8,586.9L618.1,586.0M607.7,587.7L612.0,587.1M601.5,588.1L605.9,587.9M595.3,588.2L599.7,588.2M589.1,587.9L593.5,588.1M583.0,587.1L587.3,587.7M576.9,586.0L581.2,586.9M570.9,584.6L575.1,585.7M565.0,582.7L569.2,584.1M559.2,580.5L563.3,582.1M553.6,577.9L557.6,579.8M548.1,575.0L552.0,577.1M542.9,571.7L546.6,574.0M537.8,568.1L541.4,570.7M533.0,564.2L536.4,567.0M528.5,560.0L531.7,563.0M524.2,555.5L527.2,558.7M520.2,550.8L523.0,554.2M516.5,545.8L519.1,549.4M513.2,540.6L515.5,544.3M510.1,535.2L512.2,539.1M507.4,529.6L509.3,533.6M505.1,523.9L506.7,528.0M503.1,518.0L504.5,522.2M501.5,512.1L502.6,516.3M500.3,506.0L501.2,510.3M499.5,499.9L500.1,504.2M499.1,493.7L499.3,498.1M499.0,487.5L499.0,491.9M499.3,481.3L499.1,485.7M500.1,475.2L499.5,479.5M501.2,469.1L500.3,473.4M502.6,463.1L501.5,467.3M504.5,457.2L503.1,461.4M506.7,451.4L505.1,455.5M509.3,445.8L507.4,449.8M512.2,440.3L510.1,444.2M515.5,435.1L513.2,438.8M519.1,430.0L516.5,433.6M523.0,425.2L520.2,428.6M527.2,420.7L524.2,423.9M531.7,416.4L528.5,419.4M536.4,412.4L533.0,415.2M541.4,408.7L537.8,411.3M546.6,405.4L542.9,407.7M552.0,402.3L548.1,404.4M557.6,399.6L553.6,401.5M563.3,397.3L559.2,398.9M569.2,395.3L565.0,396.7M575.1,393.7L570.9,394.8M581.2,392.5L576.9,393.4M587.3,391.7L583.0,392.3M593.5,391.3L589.1,391.5M599.7,391.2L595.3,391.2M605.9,391.5L601.5,391.3M612.0,392.3L607.7,391.7M618.1,393.4L613.8,392.5M624.1,394.8L619.9,393.7M630.0,396.7L625.8,395.3M635.8,398.9L631.7,397.3M641.4,401.5L637.4,399.6M646.9,404.4L643.0,402.3M652.1,407.7L648.4,405.4M657.2,411.3L653.6,408.7M662.0,415.2L658.6,412.4M666.5,419.4L663.3,416.4M670.8,423.9L667.8,420.7M674.8,428.6L672.0,425.2M678.5,433.6L675.9,430.0M681.8,438.8L679.5,435.1M684.9,444.2L682.8,440.3M687.6,449.8L685.7,445.8M689.9,455.5L688.3,451.4M691.9,461.4L690.5,457.2M693.5,467.3L692.4,463.1M694.7,473.4L693.8,469.1M695.5,479.5L694.9,475.2M695.9,485.7L695.7,481.3" stroke="#1818e8" stroke-width="1.5" fill="none"/>
<circle cx="597.5" cy="489.7" r="97.5" fill="none" stroke="#b020e0" stroke-width="1"/>
<circle cx="597.5" cy="489.7" r="59.5" fill="none" stroke="#ff3a3a" stroke-width="1"/>
<circle cx="597.5" cy="489.7" r="129.5" fill="none" stroke="#ff3a3a" stroke-width="1"/>
<path d="M597.5,360.7L597.5,429.7M597.5,549.7L597.5,618.7M468.5,489.7L537.5,489.7" stroke="#ff2a2a" stroke-width="1.2" fill="none"/>
<path d="M657.0,489.7L657.0,520.7L669.5,520.7" stroke="#e02020" stroke-width="1" fill="none" opacity="0"/>
<path d="M591.5,366.7L603.5,366.7L597.5,360.2Z M591.5,612.7L603.5,612.7L597.5,619.2Z M474.5,483.7L474.5,495.7L468.0,489.7Z M720.5,483.7L720.5,495.7L727.0,489.7Z" fill="#1010e8"/>
<rect x="593.5" y="425.7" width="8" height="8" fill="#0a10e0"/>
<rect x="593.5" y="545.7" width="8" height="8" fill="#0a10e0"/>
<rect x="533.5" y="485.7" width="8" height="8" fill="#0a10e0"/>
<rect x="653.5" y="485.7" width="8" height="8" fill="#0a10e0"/>
<path d="M657.5,493.7L657.5,496.2L668.5,496.2" stroke="#ff2a2a" stroke-width="1" fill="none"/>
<rect x="667.5" y="489.2" width="9" height="9" fill="#0a1030" stroke="#0020a0" stroke-width="1"/>
<rect x="213" y="42" width="167" height="15" fill="#fffde0"/>
<rect x="217.5" y="46" width="101" height="6" fill="#fff" stroke="#ff2020" stroke-width="1.2"/>
<rect x="218" y="46.6" width="19" height="4.8" fill="#7a7a7a"/>
<rect x="259" y="46.6" width="18" height="4.8" fill="#7a7a7a"/>
<rect x="299" y="46.6" width="19" height="4.8" fill="#7a7a7a"/>
<text x="323.5" y="54" font-family="Liberation Sans" font-size="10.4" fill="#ff2a2a">300 µm 5:1</text>
</svg>
</div>

<!-- illumination panel -->
<div class="a" style="left:965px;top:681px;width:264px;height:174px;background:#f0f0f0;border-top:1px solid #f4f6fa;border-left:1px solid #e8e8e8"></div>
<div class="a" style="left:966px;top:682px;width:261px;height:21px;background:#9ab3d3"></div>
<div class="t" style="left:971px;top:689px;font-size:11.3px;font-weight:bold;color:#eef2f8">Illumination</div>
<div class="a" style="left:1185px;top:684px;width:19px;height:18px;background:#fff;border-left:2px solid #5a8ab8;border-top:2px solid #6a90b8;border-radius:4px 3px 0 3px"></div>
<svg class="a" style="left:1188px;top:685px" width="15" height="17" viewBox="0 0 15 17">
  <path d="M4,8 L4,5 A3.5,3.5 0 0 1 11,5 L11,8" fill="none" stroke="#333" stroke-width="1.8"/>
  <path d="M5.6,8 L5.6,5.2 A1.9,2 0 0 1 9.4,5.2 L9.4,8" fill="none" stroke="#aaa" stroke-width="0.8"/>
  <ellipse cx="7.5" cy="11.5" rx="5.8" ry="4.6" fill="#a8a8a8" stroke="#333" stroke-width="1.2"/>
  <path d="M7.5,9.5 L7.5,14.5" stroke="#111" stroke-width="2"/>
  <circle cx="7.5" cy="10" r="1.3" fill="#111"/>
</svg>
<div class="a" style="left:1208px;top:684px;width:18px;height:18px;background:linear-gradient(#fafafa,#e0e0e0);border:1px solid #888;border-radius:3px"></div>
<svg class="a" style="left:1212px;top:688px" width="10" height="10" viewBox="0 0 10 10"><path d="M1.5,1.5 L8.5,8.5 M8.5,1.5 L1.5,8.5" stroke="#000" stroke-width="2.6"/></svg>

<!-- group boxes -->
<div class="a" style="left:967px;top:707px;width:84px;height:146px;border:1px solid #b4b4b4;box-shadow:inset 1px 1px 0 #fff,1px 1px 0 #fff"></div>
<div class="a" style="left:1055px;top:707px;width:84px;height:146px;border:1px solid #b4b4b4;box-shadow:inset 1px 1px 0 #fff,1px 1px 0 #fff"></div>
<div class="a" style="left:1142px;top:707px;width:84px;height:146px;border:1px solid #b4b4b4;box-shadow:inset 1px 1px 0 #fff,1px 1px 0 #fff"></div>
<div class="t" style="left:987px;top:714px;font-size:11.3px;font-weight:bold;color:#222">Incident</div>
<div class="t" style="left:1064px;top:714px;font-size:11.3px;font-weight:bold;color:#222">Transmitted</div>
<div class="t" style="left:1160px;top:714px;font-size:11.3px;font-weight:bold;color:#222">Ringlight</div>

<!-- sliders -->
<div class="a" style="left:973px;top:740px;width:8px;height:100px;background:linear-gradient(90deg,#f4f4f4,#fbfbfb)"></div>
<div class="a" style="left:980px;top:741px;width:2px;height:98px;background:#505050"></div>
<div class="a" style="left:991px;top:735px;width:14px;height:105px;background:#e4e7e9;border:1px solid #dcdcdc;border-top-color:#cfcfcf"></div>
<div class="a" style="left:989px;top:779px;width:20px;height:9px;background:linear-gradient(#fbfbfb,#dadada);border:1px solid #8a8a8a;border-radius:3px"></div>

<div class="a" style="left:1061px;top:740px;width:8px;height:100px;background:linear-gradient(90deg,#f4f4f4,#fbfbfb)"></div>
<div class="a" style="left:1068px;top:741px;width:2px;height:98px;background:#505050"></div>
<div class="a" style="left:1079px;top:735px;width:14px;height:105px;background:#e4e7e9;border:1px solid #dcdcdc;border-top-color:#cfcfcf"></div>
<div class="a" style="left:1077px;top:783px;width:20px;height:9px;background:linear-gradient(#fbfbfb,#dadada);border:1px solid #8a8a8a;border-radius:3px"></div>

<div class="a" style="left:1148px;top:740px;width:8px;height:100px;background:linear-gradient(90deg,#f4f4f4,#fbfbfb)"></div>
<div class="a" style="left:1155px;top:741px;width:2px;height:98px;background:#505050"></div>
<div class="a" style="left:1166px;top:735px;width:14px;height:105px;background:#e4e7e9;border:1px solid #dcdcdc;border-top-color:#cfcfcf"></div>
<div class="a" style="left:1164px;top:827px;width:20px;height:9px;background:linear-gradient(#fbfbfb,#dadada);border:1px solid #8a8a8a;border-radius:3px"></div>

<div class="pct" style="left:1019px;top:737px;font-size:10.5px">100 %</div>
<div class="pct" style="left:1019px;top:781px;font-size:10.5px">54.0%</div>
<div class="pct" style="left:1019px;top:834px;font-size:10.5px">0 %</div>
<div class="pct" style="left:1107px;top:739px;font-size:10.5px">100 %</div>
<div class="pct" style="left:1107px;top:781px;font-size:10.5px">50.0%</div>
<div class="pct" style="left:1107px;top:836px;font-size:10.5px">0 %</div>
<div class="pct" style="left:1194px;top:739px;font-size:10.5px">100 %</div>
<div class="pct" style="left:1194px;top:781px;font-size:10.5px">5.0%</div>
<div class="pct" style="left:1194px;top:836px;font-size:10.5px">0 %</div>


<!-- results table -->
<div class="a" style="left:210px;top:855px;width:21px;height:103px;background:#f0f0f0"></div>
<div class="a" style="left:211px;top:857px;width:1019px;height:101px;background:#fff;border-left:1px solid #d8d8d8;border-top:1px solid #e4e4e4"></div>
<div class="a" style="left:213px;top:859px;width:1016px;height:83px;background:#d6d6d6"></div>
<!-- header -->
<div class="cell hd" style="left:214px;top:860px;width:148px;font-weight:bold;padding-left:3px;color:#111">Circle 1</div>
<div class="cell hd" style="left:363px;top:860px;width:162px;padding-left:4px">value</div>
<div class="cell hd" style="left:526px;top:860px;width:161px;padding-left:4px">nominal</div>
<div class="cell hd" style="left:688px;top:860px;width:162px;padding-left:4px">lower limit</div>
<div class="cell hd" style="left:851px;top:860px;width:161px;padding-left:4px">upper limit</div>
<div class="cell hd" style="left:1013px;top:860px;width:161px;padding-left:4px">graphic</div>
<div class="cell hd" style="left:1175px;top:860px;width:54px;padding-left:4px">unit</div>
<!-- row 1 -->
<div class="cell hd" style="left:214px;top:881px;width:148px;padding-left:3px">diameter d</div>
<div class="cell nb" style="left:363px;top:881px;width:162px;background:#fefee4;color:#1c8c1c">0.5798</div>
<div class="cell" style="left:526px;top:881px;width:161px;background:#e3e3e3;text-align:right;padding-right:4px">0.6000</div>
<div class="cell" style="left:688px;top:881px;width:162px;background:#efefef;text-align:right;padding-right:5px">0.5000</div>
<div class="cell" style="left:851px;top:881px;width:161px;background:#efefef;text-align:right;padding-right:4px">0.7000</div>
<div class="cell" style="left:1013px;top:881px;width:161px;background:#efefef"></div>
<div class="cell" style="left:1175px;top:881px;width:54px;background:#e6e6e6;padding-left:4px">mm</div>
<!-- row 2 -->
<div class="cell hd" style="left:214px;top:902px;width:148px;padding-left:3px">radius r</div>
<div class="cell nb" style="left:363px;top:902px;width:162px;background:#fefee4;color:#1c1c8a">0.2899</div>
<div class="cell" style="left:526px;top:902px;width:161px;background:#e3e3e3"></div>
<div class="cell" style="left:688px;top:902px;width:162px;background:#efefef"></div>
<div class="cell" style="left:851px;top:902px;width:161px;background:#efefef"></div>
<div class="cell" style="left:1013px;top:902px;width:161px;background:#efefef"></div>
<div class="cell" style="left:1175px;top:902px;width:54px;background:#e6e6e6;padding-left:4px">mm</div>
<!-- row 3 -->
<div class="cell hd" style="left:214px;top:923px;width:148px;padding-left:3px">form t</div>
<div class="cell nb" style="left:363px;top:923px;width:162px;background:#fefee4;color:#1c1c8a">0.0083</div>
<div class="cell" style="left:526px;top:923px;width:161px;background:#e3e3e3"></div>
<div class="cell" style="left:688px;top:923px;width:162px;background:#efefef"></div>
<div class="cell" style="left:851px;top:923px;width:161px;background:#efefef"></div>
<div class="cell" style="left:1013px;top:923px;width:161px;background:#efefef"></div>
<div class="cell" style="left:1175px;top:923px;width:54px;background:#e6e6e6;padding-left:4px">mm</div>
<!-- graphic -->
<svg class="a" style="left:1013px;top:881px" width="161" height="20" viewBox="1013 881 161 20">
  <path d="M1016.5,889.8 L1171.5,889.8 M1021.5,885.5 L1021.5,894 M1165.5,885.5 L1165.5,894" stroke="#bdbdbd" stroke-width="1.4"/>
  <path d="M1093.7,883.5 L1093.7,896" stroke="#777" stroke-width="2"/>
  <path d="M1078.5,886.8 L1081.5,889.8 L1078.5,892.8 L1075.5,889.8 Z" fill="#108a10"/>
</svg>
<div class="a" style="left:1230px;top:855px;width:1px;height:103px;background:#f8f8f8"></div>


<!-- right toolbar -->
<div class="a" style="left:1229px;top:42px;width:2px;height:916px;background:#f0f0f0"></div>
<div class="a" style="left:1231px;top:42px;width:1px;height:916px;background:#a8a8a8"></div>
<div class="a" style="left:1232px;top:42px;width:1px;height:916px;background:#fcfcfc"></div>

<!-- 1 UHL -->
<div class="tb" style="top:47px"><svg width="33" height="32" viewBox="0 0 33 32">
  <path d="M3.5,8.5 Q6,5 9,8 Q16.5,12 24,8 Q27,5 29.5,8.5 L29.5,22 Q16.5,17 3.5,22 Z" fill="#fff" stroke="#108c8c" stroke-width="2.2"/>
  <path d="M3.5,22 Q16.5,31 29.5,22" fill="none" stroke="#108c8c" stroke-width="2.2"/>
  <path d="M8,11.5 L8,18.5 L12.5,18.5 L12.5,11 M16,11 L16,18 M20.5,11.5 L20.5,18 M16,14.5 L20.5,14.5 M24,11 L24,18 L27,18" fill="none" stroke="#108c8c" stroke-width="2"/>
</svg></div>
<!-- 2 ? -->
<div class="tb" style="top:83px"><svg width="33" height="32" viewBox="0 0 33 32">
  <text x="17" y="30" text-anchor="middle" font-family="Liberation Serif" font-weight="bold" font-size="37" fill="#108a8a">?</text>
</svg></div>
<!-- 3 eye -->
<div class="tb" style="top:119px"><svg width="33" height="32" viewBox="0 0 33 32">
  <path d="M1,13 Q12,1 31,9" fill="none" stroke="#111" stroke-width="2.6"/>
  <path d="M2,10 Q10,4 22,6" fill="none" stroke="#30a0a0" stroke-width="3" stroke-dasharray="1.2 0.8"/>
  <path d="M1,17 Q14,5 32,17 Q16,30 1,17 Z" fill="#e4e4e4" stroke="#111" stroke-width="2.4"/>
  <circle cx="17" cy="17" r="8" fill="#1018c0"/>
  <circle cx="17" cy="17" r="5.6" fill="#2a48ff"/>
  <circle cx="17" cy="17" r="3" fill="#000"/>
  <circle cx="20" cy="14" r="1.6" fill="#9ef"/>
  <path d="M4,25 Q16,31 29,24" fill="none" stroke="#555" stroke-width="1.6" stroke-dasharray="1 1"/>
</svg></div>
<!-- 4 folder -->
<div class="tb" style="top:155px"><svg width="33" height="32" viewBox="0 0 33 32">
  <path d="M4,8 L10,4 L15,4 L18,7 L30,7 L30,28 L6,28 Z" fill="#d8d460" stroke="#505010" stroke-width="0.8"/>
  <path d="M1.5,12 L26,11 L31.5,26 L31,29 L6,29 Z" fill="#e2de6a" stroke="#222" stroke-width="1"/>
  <path d="M27,12 L32,26" stroke="#000" stroke-width="1.5"/>
</svg></div>
<!-- 5 floppy -->
<div class="tb" style="top:191px"><svg width="33" height="32" viewBox="0 0 33 32">
  <rect x="3.5" y="2" width="29" height="31" fill="#2c2a56" rx="1"/>
  <path d="M32.5,3 L32.5,33 L5,33" stroke="#000" stroke-width="1.6" fill="none"/>
  <rect x="9" y="3" width="15" height="8" fill="#c0bcd8"/>
  <rect x="19" y="4" width="3" height="6" fill="#333"/>
  <rect x="9" y="16" width="19" height="14" fill="#f0eefa"/>
</svg></div>
<!-- 6 printer -->
<div class="tb" style="top:227px"><svg width="33" height="32" viewBox="0 0 33 32">
  <path d="M13,3 L29,3 L24,13 L8,13 Z" fill="#fff" stroke="#111" stroke-width="1"/>
  <path d="M13,5 L25,5 L21,12 L9,12 Z" fill="#8a8ad0"/>
  <path d="M2,16 L6,12 L31,12 L31,24 L28,28 L2,28 Z" fill="#d8d8d8" stroke="#111" stroke-width="1"/>
  <path d="M2,22 L28,22 L31,18 L31,24 L28,28 L2,28 Z" fill="#109090"/>
  <rect x="3" y="16" width="25" height="6" fill="#e8e8e8"/>
  <rect x="5" y="17.5" width="2.5" height="2" fill="#00c000"/><rect x="9" y="17.5" width="2.5" height="2" fill="#00c000"/>
  <rect x="22" y="17" width="3" height="1.8" fill="#e04040"/>
  <rect x="6" y="28" width="22" height="3" fill="#222"/>
</svg></div>
<!-- 7 line w/ balls -->
<div class="tb" style="top:263px"><svg width="33" height="32" viewBox="0 0 33 32">
  <path d="M4,28 L29,5" stroke="#111" stroke-width="2"/>
  <circle cx="11" cy="22" r="4.2" fill="#f02020"/><circle cx="10" cy="21" r="1.6" fill="#ff9a9a"/>
  <circle cx="24.5" cy="9.5" r="4.2" fill="#f02020"/><circle cx="23.5" cy="8.5" r="1.6" fill="#ff9a9a"/>
</svg></div>
<!-- 8 crossing lines -->
<div class="tb" style="top:299px"><svg width="33" height="32" viewBox="0 0 33 32">
  <path d="M3,23 L31,16" stroke="#111" stroke-width="1.8"/>
  <path d="M14,4 L21,31" stroke="#111" stroke-width="1.8"/>
  <path d="M18,19 L27,4" stroke="#2040e0" stroke-width="1.6" stroke-dasharray="2.5 1.5"/>
  <path d="M14,15 Q20,12 23,19" fill="none" stroke="#e02020" stroke-width="1.5"/>
</svg></div>
<!-- 9 shapes -->
<div class="tb" style="top:335px"><svg width="33" height="32" viewBox="0 0 33 32">
  <circle cx="10" cy="14" r="7" fill="#1040e0"/><circle cx="8" cy="16" r="4" fill="#10b0f0"/>
  <rect x="11" y="14" width="16" height="17" fill="#b0a040" stroke="#111" stroke-width="1.3"/>
  <path d="M2,26 L10,14 L19,26 Z" fill="#b890e8" stroke="#222" stroke-width="1"/>
  <path d="M10,12 L24,6 L30,2 M26,3 L31,10 L22,28" fill="none" stroke="#333" stroke-width="1.1"/>
</svg></div>
<!-- 10 hexagon -->
<div class="tb" style="top:371px">
  <div class="a" style="left:3px;top:3px;width:29px;height:26px;clip-path:polygon(25% 0,75% 0,100% 50%,75% 100%,25% 100%,0 50%);background:radial-gradient(circle at 50% 50%,rgba(255,255,255,.9) 0,rgba(255,255,255,.3) 35%,rgba(255,255,255,0) 60%),conic-gradient(from 0deg,#ff30e0,#ff1010 90deg,#ffff00 150deg,#00ff00 210deg,#00ffff 270deg,#2020ff 330deg,#ff30e0 360deg)"></div>
</div>
<!-- 11 gears -->
<div class="tb" style="top:407px"><svg width="33" height="32" viewBox="0 0 33 32">
  <circle cx="14" cy="9" r="7.5" fill="#d8d098" stroke="#111" stroke-width="2.2" stroke-dasharray="1.6 1.4"/>
  <circle cx="14" cy="9" r="2.4" fill="#111"/>
  <circle cx="25" cy="18" r="6.5" fill="#c8c080" stroke="#111" stroke-width="2.2" stroke-dasharray="1.6 1.4"/>
  <circle cx="25" cy="18" r="2.2" fill="#111"/>
  <circle cx="11" cy="23" r="7.5" fill="#e0d8a0" stroke="#111" stroke-width="2.2" stroke-dasharray="1.6 1.4"/>
  <circle cx="11" cy="23" r="2.4" fill="#111"/>
</svg></div>
<!-- 12 5:1 -->
<div class="tb" style="top:442px"><div class="t" style="left:7px;top:11px;font-size:12px;font-weight:bold;color:#10107a">5:1</div></div>
<!-- 13 SH -->
<div class="tb" style="top:478px"><div class="t" style="left:8px;top:11px;font-size:12px;font-weight:bold;color:#10107a">SH</div></div>

<!-- bottom group -->
<div class="tb" style="top:736px"><svg width="33" height="32" viewBox="0 0 33 32">
  <defs><radialGradient id="mg" cx=".5" cy=".5" r=".5"><stop offset=".75" stop-color="#108080"/><stop offset="1" stop-color="#108080" stop-opacity=".2"/></radialGradient></defs>
  <circle cx="17" cy="16.5" r="14" fill="url(#mg)"/>
  <path d="M10,23 L10,11.5 L17,19.5 L24,11.5 L24,23" fill="none" stroke="#000" stroke-width="3" stroke-linejoin="miter"/>
</svg></div>
<div class="tb" style="top:773px"><svg width="33" height="32" viewBox="0 0 33 32">
  <circle cx="17" cy="16" r="13" fill="#ff1010"/>
  <circle cx="17" cy="16" r="10" fill="#ffb0b0" stroke="#111" stroke-width="1.3"/>
  <circle cx="17" cy="16" r="6.5" fill="#ff8080" stroke="#111" stroke-width="1.3"/>
  <path d="M3,16 L31,16 M17,2 L17,30" stroke="#111" stroke-width="1.6"/>
</svg></div>
<div class="tb" style="top:809px"><svg width="33" height="32" viewBox="0 0 33 32">
  <rect x="4" y="3" width="26" height="27" fill="#fff" stroke="#111" stroke-width="1.4"/>
  <path d="M30,4 L30,31 L5,31" stroke="#000" stroke-width="2.2" fill="none"/>
  <path d="M8,8 L26,8 M8,12 L25,12 M8,16 L24,16 M8,20 L26,20 M8,24 L22,24" stroke="#9040b0" stroke-width="1.8" stroke-dasharray="2 0.7 3 0.7"/>
  <path d="M8,10 L24,10 M8,14 L22,14 M8,18 L25,18 M8,22 L20,22" stroke="#c8a0e0" stroke-width="1" stroke-dasharray="1.5 1"/>
</svg></div>
<div class="tb" style="top:846px"><svg width="33" height="32" viewBox="0 0 33 32">
  <circle cx="17" cy="13" r="5" fill="#ffff40" stroke="#333" stroke-width="1"/>
  <path d="M15,12 L16,14 M19,12 L18,14" stroke="#e04000" stroke-width="1"/>
  <rect x="14.5" y="17.5" width="5" height="3.5" fill="#a0a040" stroke="#222" stroke-width="0.8"/>
  <path d="M14.5,19.2 L19.5,19.2" stroke="#222" stroke-width="0.6"/>
</svg></div>
<div class="tb" style="top:883px"><svg width="33" height="32" viewBox="0 0 33 32">
  <rect x="4" y="3" width="27" height="27" fill="#ff2020"/>
  <rect x="4" y="3" width="27" height="27" fill="none" stroke="#ff6060" stroke-width="2"/>
  <text x="17.5" y="26" text-anchor="middle" font-family="Liberation Sans" font-style="italic" font-size="24" fill="#fff">C</text>
</svg></div>
<div class="tb" style="top:920px"><svg width="33" height="32" viewBox="0 0 33 32">
  <rect x="0" y="26" width="33" height="6" fill="#888"/>
  <path d="M0,27 L33,27 M0,29.5 L33,29.5" stroke="#444" stroke-width="1" stroke-dasharray="1 1"/>
  <rect x="13" y="4" width="16" height="24" fill="#20a0a0" stroke="#111" stroke-width="1.5"/>
  <path d="M14,16 L28,8 L28,27 L14,27 Z" fill="#108040"/>
  <path d="M14,5 L28,5 L28,11 L14,14 Z" fill="#40d0f0"/>
  <circle cx="18" cy="7" r="2" fill="#ff0"/>
  <path d="M4,10 L13,5 L13,31 L4,29 Z" fill="#fff" stroke="#111" stroke-width="1.3"/>
</svg></div>


<!-- status bar -->
<div class="a" style="left:0;top:958px;width:1274px;height:2px;background:#f6f6f6"></div>
<div class="a" style="left:0;top:960px;width:1274px;height:1px;background:#9a9a9a"></div>
<div class="a" style="left:0;top:961px;width:1274px;height:17px;background:#f0f0f0"></div>
<div class="a" style="left:100px;top:962px;width:199px;height:16px;background:#f0ecec"></div>
<div class="a" style="left:99px;top:962px;width:1px;height:16px;background:#e0e0e0"></div>
<div class="a" style="left:299px;top:962px;width:1px;height:16px;background:#dcdcdc"></div>
<div class="a" style="left:0;top:978px;width:1274px;height:2px;background:#fafafa"></div>
<div class="a" style="left:0;top:980px;width:1274px;height:2px;background:#2c2c2c"></div>
<div class="t" style="left:103px;top:965px;font-size:11.2px;letter-spacing:-0.05px;color:#222">x=22.3523 y=9.0912 z=-0.1128</div>
<svg class="a" style="left:2px;top:962px" width="96" height="17" viewBox="2 962 96 17">
  <path d="M4,976 L18,969" stroke="#555" stroke-width="1.6"/>
  <circle cx="4.5" cy="976" r="1.5" fill="#444"/>
  <text x="4" y="973" font-family="Liberation Sans" font-weight="bold" font-size="7" fill="#ff2020" transform="rotate(-22 10 970)">OCS</text>
  <rect x="24" y="962.5" width="3" height="8" fill="#999" stroke="#333" stroke-width="0.8"/>
  <ellipse cx="25.5" cy="974" rx="6" ry="3" fill="#ccc" stroke="#222" stroke-width="1"/>
  <rect x="27" y="973" width="2" height="1" fill="#e00"/>
  <path d="M37,965 L39,963 L45,963 L47,965 L47,977 L37,977 Z" fill="#fff" stroke="#111" stroke-width="1.1"/>
  <rect x="66.5" y="964" width="15" height="14" fill="#fdfdfd" stroke="#e6e6e6"/>
  <rect x="83.5" y="964.5" width="12.5" height="12.5" fill="#e8e8e8" stroke="#0a10e0" stroke-width="1.6"/>
</svg>


</body></html>
